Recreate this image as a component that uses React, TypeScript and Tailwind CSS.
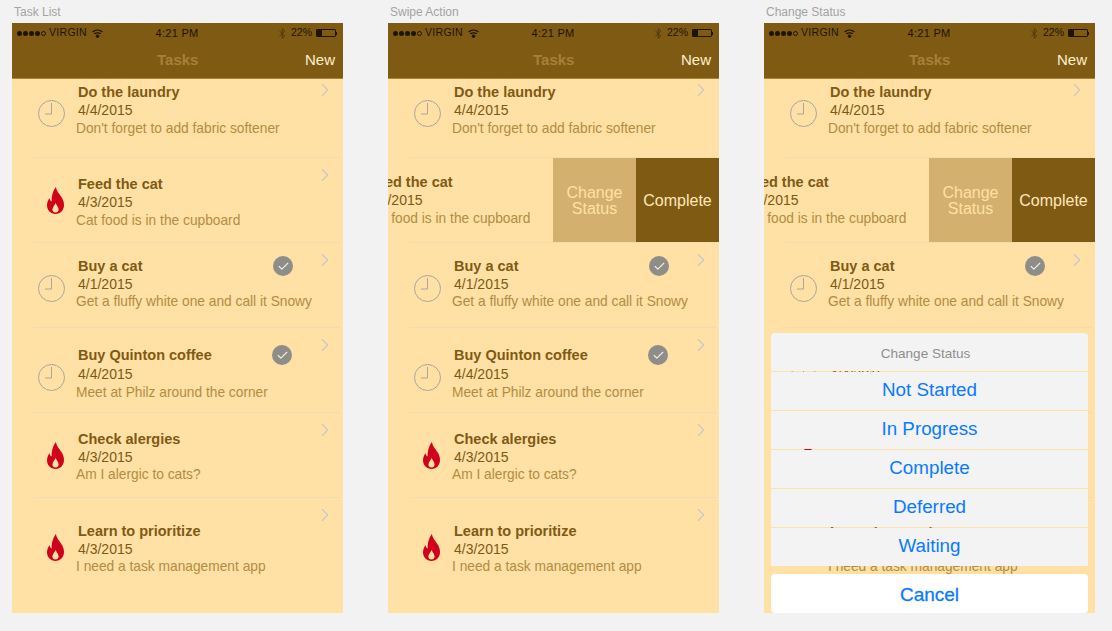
import { Check, ChevronRight } from "lucide-react";

const tasks = [
  { title: "Do the laundry", date: "4/4/2015", note: "Don't forget to add fabric softener", hot: false, done: false, rowH: "h-[78px]", top: "pt-[4px]", iconTop: "mt-[21px]", chevTop: "mt-0", checkClass: "", dateClass: "", noteClass: "mt-[1px]" },
  { title: "Feed the cat", date: "4/3/2015", note: "Cat food is in the cupboard", hot: true, done: false, rowH: "h-[84px]", top: "pt-[17px]", iconTop: "mt-[29px]", chevTop: "mt-[6px]", checkClass: "", dateClass: "", noteClass: "mt-[1px]" },
  { title: "Buy a cat", date: "4/1/2015", note: "Get a fluffy white one and call it Snowy", hot: false, done: true, rowH: "h-[84px]", top: "pt-[14px]", iconTop: "mt-[32px]", chevTop: "mt-[6px]", checkClass: "mt-[13px] mr-[21px]", dateClass: "", noteClass: "" },
  { title: "Buy Quinton coffee", date: "4/4/2015", note: "Meet at Philz around the corner", hot: false, done: true, rowH: "h-[84px]", top: "pt-[18px]", iconTop: "mt-[36px]", chevTop: "mt-[6px]", checkClass: "mt-[17px] mr-[22px]", dateClass: "mt-[1px]", noteClass: "mt-[1px]" },
  { title: "Check alergies", date: "4/3/2015", note: "Am I alergic to cats?", hot: true, done: false, rowH: "h-[84px]", top: "pt-[17px]", iconTop: "mt-[29px]", chevTop: "mt-[6px]", checkClass: "", dateClass: "", noteClass: "" },
  { title: "Learn to prioritize", date: "4/3/2015", note: "I need a task management app", hot: true, done: false, rowH: "h-[114px]", top: "pt-[24px]", iconTop: "mt-[36px]", chevTop: "mt-[6px]", checkClass: "", dateClass: "", noteClass: "" },
];

type Task = (typeof tasks)[number];

const ClockIcon = () => (
  <svg width="27" height="27" viewBox="0 0 27 27" fill="none" stroke="#a8a69e" strokeWidth="1">
    <circle cx="13.5" cy="13.5" r="13" />
    <path d="M13.5 3 V14 H7" />
  </svg>
);

const FlameIcon = () => (
  <svg width="17" height="27" viewBox="0 0 17 27">
    <path
      fillRule="evenodd"
      fill="#d0021b"
      d="M8.8 0 C9.6 4 12 6.5 14 9.5 C16 12.3 17 15 17 18 C17 23.2 13.2 27 8.5 27 C3.8 27 0 23.2 0 18.3 C0 15.6 1 13.3 2.5 11.2 C3 13 3.6 14 4.6 14.6 C4.3 9.5 5.8 4.2 8.8 0 Z M8.6 16 C7.6 18.4 5.4 20.2 5.4 22.6 C5.4 24.4 6.8 25.6 8.5 25.6 C10.2 25.6 11.6 24.4 11.6 22.6 C11.6 20.2 9.6 18.4 8.6 16 Z"
    />
  </svg>
);

const RowIcon = ({ hot }: { hot: boolean }) => (
  <div className="w-[66px] shrink-0">
    {hot ? (
      <div className="ml-[35px]">
        <FlameIcon />
      </div>
    ) : (
      <div className="ml-[26px]">
        <ClockIcon />
      </div>
    )}
  </div>
);

const RowText = ({ task }: { task: Task }) => (
  <div className="whitespace-nowrap">
    <div className="text-[14.5px] leading-[18px] font-bold text-[#7f5a13]">{task.title}</div>
    <div className={`text-[14px] leading-[18px] text-[#7f5a13] ${task.dateClass}`}>{task.date}</div>
    <div className={`-ml-[2px] text-[13.75px] leading-[18px] text-[#b38d42] ${task.noteClass}`}>{task.note}</div>
  </div>
);

const Divider = () => <div className="ml-[21px] mr-[2px] h-px bg-[#f1dcb2]" />;

const TaskRow = ({ task, last }: { task: Task; last: boolean }) => (
  <div>
    <div className={`flex ${task.rowH}`}>
      <div className={task.iconTop}>
        <RowIcon hot={task.hot} />
      </div>
      <div className={`min-w-0 flex-1 ${task.top}`}>
        <RowText task={task} />
      </div>
      {task.done && (
        <div className={`flex h-[20px] w-[20px] shrink-0 items-center justify-center rounded-full bg-[#8f8d88] ${task.checkClass}`}>
          <Check size={13} color="#f3efe4" strokeWidth={2} />
        </div>
      )}
      <div className={`mr-[7px] shrink-0 ${task.chevTop}`}>
        <ChevronRight size={22} color="#c8c8cc" strokeWidth={1.2} />
      </div>
    </div>
    {!last && <Divider />}
  </div>
);

const SwipedRow = ({ task }: { task: Task }) => (
  <div>
    <div className="flex h-[84px] overflow-hidden">
      <div className="min-w-0 flex-1 overflow-hidden">
        <div className="-ml-[20px] pt-[15px]">
          <RowText task={task} />
        </div>
      </div>
      <div className="flex w-[83px] items-center justify-center bg-[#d3b06d] pt-[2px] text-center text-[16px] leading-[16px] text-[#ffe0a3]">
        Change
        <br />
        Status
      </div>
      <div className="flex w-[83px] items-center justify-center bg-[#7f5a13] pt-[2px] text-[16px] text-[#ffe8ba]">
        Complete
      </div>
    </div>
    <Divider />
  </div>
);

const StatusBar = () => (
  <div className="flex h-[18px] items-center pl-[5px] pr-[6px] text-[10.5px] text-[#1d1503]">
    <div className="flex flex-1 items-center">
      <div className="flex items-center gap-[1px]">
        {[0, 1, 2, 3].map((i) => (
          <span key={i} className="h-[5px] w-[5px] rounded-full bg-[#1d1503]" />
        ))}
        <span className="h-[5px] w-[5px] rounded-full border border-[#1d1503]" />
      </div>
      <span className="ml-[3px] tracking-[0.3px]">VIRGIN</span>
      <svg className="ml-[5px]" width="11" height="9" viewBox="0 0 11 9" fill="none" stroke="#1d1503" strokeWidth="1.2">
        <path d="M0.6 3 C3.5 0.4 7.5 0.4 10.4 3" />
        <path d="M2.3 4.9 C4 3.4 7 3.4 8.7 4.9" />
        <path d="M4 6.6 C4.9 5.9 6.1 5.9 7 6.6" />
        <path d="M5.5 8.6 L4.7 7.7 H6.3 Z" fill="#1d1503" />
      </svg>
    </div>
    <span className="text-[11px] tracking-[0.3px]">4:21 PM</span>
    <div className="flex flex-1 items-center justify-end">
      <svg width="7" height="11" viewBox="0 0 7 11" fill="none" stroke="#4f3a10" strokeWidth="1">
        <path d="M0.5 3 L5.8 7.8 L3.2 10.2 V0.8 L5.8 3.2 L0.5 8" />
      </svg>
      <span className="ml-[5px]">22%</span>
      <div className="ml-[4px] flex h-[8px] w-[20px] rounded-[1px] border border-[#1d1503]">
        <span className="h-full w-[5px] bg-[#1d1503]" />
      </div>
      <span className="h-[3px] w-[1px] bg-[#1d1503]" />
    </div>
  </div>
);

const Header = () => (
  <div className="h-[56px] border-b border-[#a9843a] bg-[#7f5a13] pt-[1px]">
    <StatusBar />
    <div className="flex h-[36px] items-center justify-between pl-[145px] pr-[8px]">
      <span className="text-[15px] font-bold text-[#a5803a]">Tasks</span>
      <span className="text-[15px] text-[#fff0cf]">New</span>
    </div>
  </div>
);

const ActionSheet = () => (
  <div className="absolute bottom-0 left-[7px] right-[7px] text-center text-[#0a7aff]">
    <div className="flex flex-col gap-px">
      <div className="flex h-[38px] items-center justify-center rounded-t-[4px] bg-[#f3f3f3] pr-[8px] pt-[4px] text-[13.5px] text-[#8e8e8e]">
        Change Status
      </div>
      {["Not Started", "In Progress", "Complete", "Deferred", "Waiting"].map((s) => (
        <div key={s} className="flex h-[38px] items-center justify-center bg-[#f3f3f3] pb-[2px] text-[18.8px]">
          {s}
        </div>
      ))}
    </div>
    <div className="mt-[8px] flex h-[39px] items-center justify-center rounded-[4px] bg-white pt-[3px] text-[19px] [-webkit-text-stroke:0.3px]">
      Cancel
    </div>
  </div>
);

const Phone = ({ label, swiped, sheet }: { label: string; swiped?: boolean; sheet?: boolean }) => (
  <div className="w-[331px]">
    <div className="flex h-[23px] items-center pl-[2px] pt-[1px] text-[12px] text-[#a3a3a3]">{label}</div>
    <div className="relative h-[590px] overflow-hidden bg-[#ffe0a5]">
      <Header />
      {tasks.map((t, i) =>
        swiped && i === 1 ? (
          <SwipedRow key={t.title} task={t} />
        ) : (
          <TaskRow key={t.title} task={t} last={i === tasks.length - 1} />
        )
      )}
      {sheet && <ActionSheet />}
    </div>
  </div>
);

export default function App() {
  return (
    <div className="flex h-[631px] w-[1112px] gap-[45px] overflow-hidden bg-[#f2f2f2] pl-[12px] font-['Liberation_Sans',sans-serif]">
      <Phone label="Task List" />
      <Phone label="Swipe Action" swiped />
      <Phone label="Change Status" swiped sheet />
    </div>
  );
}
